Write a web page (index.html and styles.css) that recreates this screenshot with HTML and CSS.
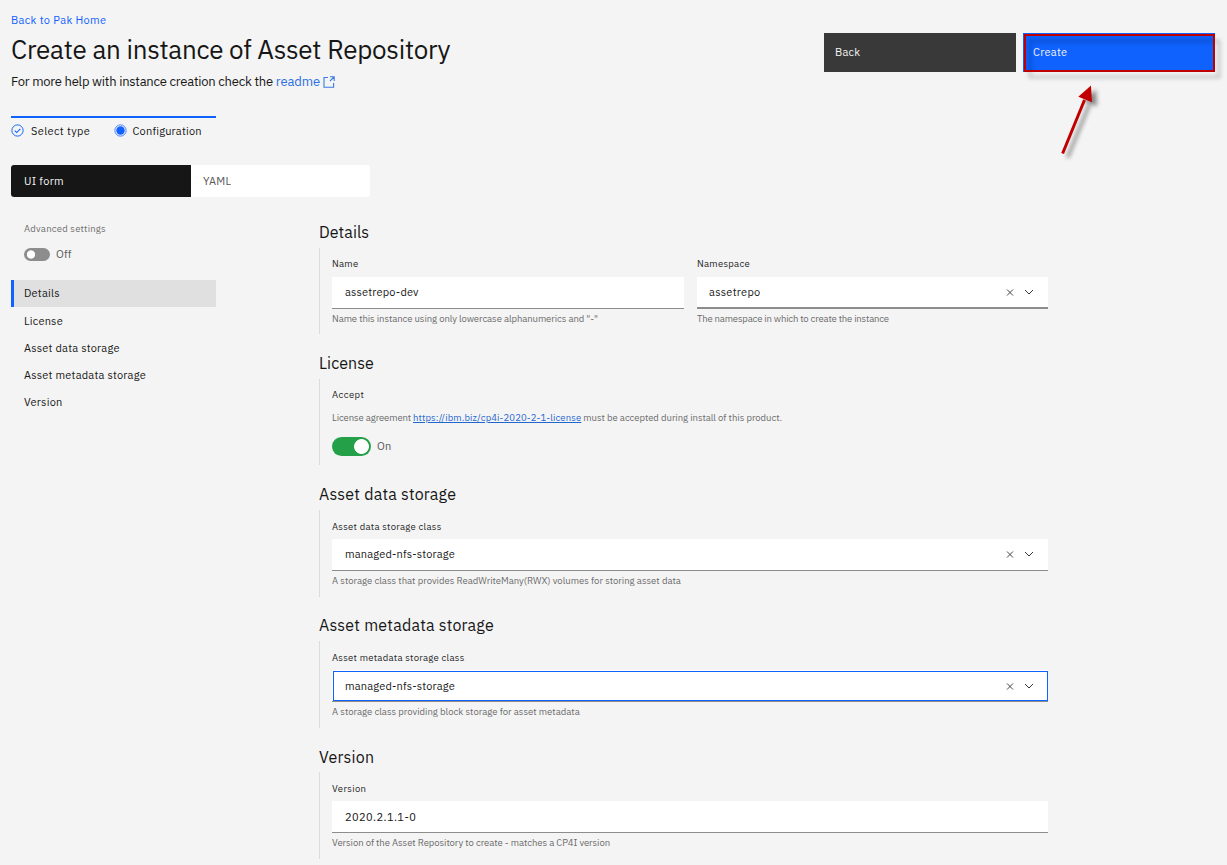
FILE: index.html
```html
<!DOCTYPE html>
<html lang="en">
<head>
<meta charset="utf-8">
<title>Create an instance of Asset Repository</title>
<link rel="stylesheet" href="styles.css">
</head>
<body>
<svg class="sprite" aria-hidden="true">
  <symbol id="close" viewBox="0 0 8 8"><path d="M1 1.500l6 6M7 1.500l-6 6" fill="none" stroke="#444" stroke-width="1"/></symbol>
  <symbol id="chevron" viewBox="0 0 10 6"><path d="M1 1l4 4 4-4" fill="none" stroke="#333" stroke-width="1"/></symbol>
</svg>
<header class="header">
  <div class="intro">
    <a class="back-link"><span class="t-back">Back to Pak Home</span></a>
    <h1 class="title">Create an instance of Asset Repository</h1>
    <p class="help-line"><span class="t-help">For more help with instance creation check the</span> <a class="readme">readme</a><svg class="launch" viewBox="0 0 12 12"><path d="M5 1.500H1v9.800h9.600V7M7 .8h4.200V5M11 1L7 5" fill="none" stroke="#3b7be0" stroke-width="1.100"/></svg></p>
  </div>
  <div class="actions">
    <button class="btn btn-dark">Back</button>
    <button class="btn btn-blue">Create<span class="highlight"></span></button>
    <svg class="arrow" viewBox="0 0 50 84"><path d="M12.600 73.500L34.500 20" stroke="#c00000" stroke-width="3"/><path d="M41 5.500L28.300 16.800 42 22.300z" fill="#c00000"/></svg>
  </div>
</header>
<div class="steps">
  <div class="step"><svg class="step-icon" viewBox="0 0 12 12"><circle cx="6" cy="6" r="5.200" fill="none" stroke="#0f62fe" stroke-width=".9"/><path d="M3.500 6.100l1.800 1.800 3.300-3.500" fill="none" stroke="#0f62fe" stroke-width="1"/></svg><span class="t-select">Select type</span></div>
  <div class="step"><svg class="step-icon" viewBox="0 0 12 12"><circle cx="6" cy="6" r="5.200" fill="none" stroke="#0f62fe" stroke-width=".7"/><circle cx="6" cy="6" r="3.900" fill="#0f62fe"/></svg><span class="t-config">Configuration</span></div>
</div>
<div class="switcher"><div class="tab tab-on">UI form</div><div class="tab">YAML</div></div>
<div class="main">
  <aside class="side">
    <div class="adv">Advanced settings</div>
    <div class="toggle-row"><span class="toggle-off"></span><span class="t-state">Off</span></div>
    <nav class="nav">
      <a class="nav-item nav-on">Details</a>
      <a class="nav-item">License</a>
      <a class="nav-item">Asset data storage</a>
      <a class="nav-item">Asset metadata storage</a>
      <a class="nav-item">Version</a>
    </nav>
  </aside>
  <main class="form">
    <section class="section"><h2 class="h h-details">Details</h2>
      <div class="body two">
        <div class="group"><label class="label">Name</label><div class="field"><span class="value">assetrepo-dev</span></div><div class="hint hint-name">Name this instance using only lowercase alphanumerics and "-"</div></div>
        <div class="group"><label class="label">Namespace</label><div class="field field-heavy"><span class="value value-ns">assetrepo</span><svg class="x"><use href="#close"/></svg><svg class="chev"><use href="#chevron"/></svg></div><div class="hint hint-ns">The namespace in which to create the instance</div></div>
      </div>
    </section>
    <section class="section"><h2 class="h h-license">License</h2>
      <div class="body">
        <div class="group"><label class="label label-accept">Accept</label>
        <div class="agree"><span class="agree-lead">License agreement</span> <a class="agree-link">https://ibm.biz/cp4i-2020-2-1-license</a> <span class="agree-tail">must be accepted during install of this product.</span></div>
        <div class="toggle-row toggle-row-on"><span class="toggle-on"></span><span class="t-state">On</span></div></div>
      </div>
    </section>
    <section class="section"><h2 class="h">Asset data storage</h2>
      <div class="body body-low">
        <div class="group"><label class="label">Asset data storage class</label><div class="field"><span class="value">managed-nfs-storage</span><svg class="x"><use href="#close"/></svg><svg class="chev"><use href="#chevron"/></svg></div><div class="hint">A storage class that provides ReadWriteMany(RWX) volumes for storing asset data</div></div>
      </div>
    </section>
    <section class="section"><h2 class="h">Asset metadata storage</h2>
      <div class="body body-low">
        <div class="group"><label class="label">Asset metadata storage class</label><div class="field field-focus"><span class="value">managed-nfs-storage</span><svg class="x"><use href="#close"/></svg><svg class="chev"><use href="#chevron"/></svg></div><div class="hint">A storage class providing block storage for asset metadata</div></div>
      </div>
    </section>
    <section class="section"><h2 class="h h-version">Version</h2>
      <div class="body body-low">
        <div class="group"><label class="label label-version">Version</label><div class="field field-version"><span class="value value-version">2020.2.1.1-0</span></div><div class="hint hint-version">Version of the Asset Repository to create - matches a CP4I version</div></div>
      </div>
    </section>
  </main>
</div>
</body>
</html>
```
FILE: styles.css
```css
* { box-sizing: border-box; }
body { margin: 0; width: 1227px; height: 865px; overflow: hidden; background: #f4f4f4; color: #161616; font: 11px/16px "IBM Plex Sans", Roboto, sans-serif; white-space: nowrap; }
.sprite { position: absolute; width: 0; height: 0; }
.header { display: flex; justify-content: space-between; height: 116px; padding: 12px 12px 0 11px; }
.back-link { display: block; height: 16px; color: #0f62fe; letter-spacing: .34px; }
.title { margin: 3px 0 0; font-size: 26px; line-height: 36px; font-weight: 400; letter-spacing: -.25px; }
.help-line { display: flex; align-items: center; margin: 6px 0 0; font-size: 13px; line-height: 18px; letter-spacing: -.23px; }
.readme { margin-left: 3px; color: #2a6fe0; letter-spacing: -.1px; }
.launch { width: 12px; height: 12px; margin-left: 2.500px; }
.actions { position: relative; display: flex; gap: 7px; padding-top: 21px; }
.btn { position: relative; width: 192px; height: 39px; padding: 0 0 1px 11px; border: 0; color: #f4f4f4; font: inherit; letter-spacing: .3px; text-align: left; }
.btn-dark { background: #393939; letter-spacing: .2px; }
.btn-blue { padding-left: 10px; background: #0f62fe; }
.highlight { position: absolute; inset: 1px 0 0 1px; border: 2px solid #c00000; filter: drop-shadow(5px 6px 2px rgba(0,0,0,.28)); }
.arrow { position: absolute; left: 226px; top: 68px; width: 50px; height: 84px; overflow: visible; filter: drop-shadow(5px 4px 2px rgba(0,0,0,.45)); }
.steps { display: flex; width: 205px; height: 49px; margin-left: 11px; border-top: 2px solid #0f62fe; padding-top: 5px; }
.step { display: flex; align-items: center; height: 16px; width: 103px; gap: 7px; letter-spacing: .36px; }
.step:last-child { gap: 6px; letter-spacing: .22px; }
.step-icon { width: 13px; height: 13px; margin: -2px 0 0; }
.switcher { display: flex; width: 359px; height: 32px; margin-left: 11px; border-radius: 3px; overflow: hidden; background: #fff; }
.tab { width: 179px; padding: 8px 12px; color: #565656; letter-spacing: .2px; }
.tab-on { width: 180px; padding-left: 13px; background: #161616; color: #f4f4f4; letter-spacing: .3px; }
.main { display: flex; padding: 25px 0 0 11px; }
.side { width: 308px; }
.adv { padding-left: 13px; height: 14px; line-height: 14px; font-size: 9.500px; color: #6f6f6f; letter-spacing: .22px; }
.toggle-row { display: flex; align-items: center; gap: 6px; height: 14px; margin: 11px 0 19px 13px; color: #565656; letter-spacing: .2px; }
.toggle-off { width: 26px; height: 13px; border-radius: 7px; background: radial-gradient(circle at 7px 6.500px, #fff 3.800px, transparent 4.500px), #8d8d8d; }
.nav-item { display: block; width: 205px; height: 27px; padding: 6px 0 0 13px; letter-spacing: .22px; }
.nav-on { padding: 5px 0 0 10px; border-left: 3px solid #0f62fe; background: #e0e0e0; }
.section { height: 131px; }
.h { margin: 0; height: 26px; font-size: 16px; line-height: 20px; font-weight: 400; letter-spacing: .21px; }
.h-details { letter-spacing: .05px; }
.h-license { letter-spacing: .08px; }
.h-version { line-height: 22px; }
.body { height: 86px; padding: 8px 0 0 12px; border-left: 1px solid #dcdcdc; }
.body-low { height: 87px; }
.two { display: grid; grid-template-columns: 352px 351px; gap: 13px; }
.group { width: 716px; }
.two .group { width: auto; }
.label { display: block; height: 21px; line-height: 15px; font-size: 9.500px; color: #262626; letter-spacing: .27px; }
.label-accept { letter-spacing: .45px; }
.label-version { letter-spacing: .35px; }
.body-low .label { line-height: 17px; }
.field { display: flex; align-items: center; height: 32px; padding: 0 14px 1px 13px; border-bottom: 1px solid #8d8d8d; background: #fff; }
.field-heavy { padding-left: 12px; border-bottom-width: 2px; padding-bottom: 0; }
.field-focus { padding-top: 1px; padding-bottom: 0; box-shadow: inset 1px 1px #fff, inset 2px 2px #0f62fe, inset -1px -1px #0f62fe; }
.field-version { padding-top: 1px; padding-bottom: 0; }
.value { letter-spacing: .18px; }
.value-ns { letter-spacing: .28px; }
.value-version { letter-spacing: .42px; }
.x { width: 8px; height: 8px; margin-left: auto; }
.chev { width: 10px; height: 6px; margin-left: 10px; }
.hint { height: 20px; line-height: 20px; font-size: 9.500px; color: #6b6b6b; }
.hint-name { letter-spacing: -.07px; }
.hint-ns { letter-spacing: -.17px; }
.hint-version { letter-spacing: -.06px; }
.agree { display: flex; gap: 2px; height: 20px; line-height: 20px; font-size: 9.500px; color: #6b6b6b; }
.agree-lead { letter-spacing: -.1px; }
.agree-link { color: #1f67cf; text-decoration: underline; letter-spacing: .13px; }
.agree-tail { letter-spacing: -.03px; }
.toggle-row-on { height: 19px; margin: 9px 0 0; }
.toggle-row-on .t-state { margin-top: -2px; }
.toggle-on { width: 39px; height: 19px; border-radius: 10px; background: radial-gradient(circle at 29.500px 9.500px, #fff 7px, transparent 7.800px), #24a148; }
```
